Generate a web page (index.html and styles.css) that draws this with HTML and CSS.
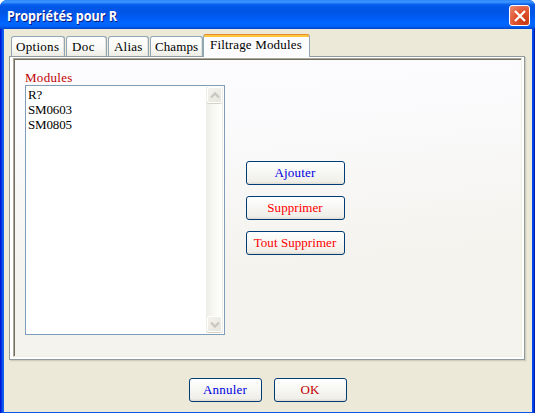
FILE: index.html
```html
<!DOCTYPE html>
<html lang="fr">
<head>
<meta charset="utf-8">
<title>Propriétés pour R</title>
<link rel="stylesheet" href="styles.css">
</head>
<body>
<div class="window">
  <header class="titlebar">
    <h1 class="title"><span class="t-text">Propriétés pour R</span></h1>
    <button class="close" aria-label="Fermer"><svg width="18" height="18" viewBox="0 0 18 18"><path d="M4 4L14 14M14 4L4 14" stroke="#fff" stroke-width="2.2" fill="none"/></svg></button>
  </header>
  <main class="client">
    <nav class="tabs">
      <div class="tab options"><span>Options</span></div>
      <div class="tab doc"><span>Doc</span></div>
      <div class="tab alias"><span>Alias</span></div>
      <div class="tab champs"><span>Champs</span></div>
      <div class="tab active"><span>Filtrage Modules</span></div>
    </nav>
    <section class="panel">
      <div class="page">
        <div class="modules">
          <div class="label"><span>Modules</span></div>
          <div class="list">
            <ul class="items"><li>R?</li><li>SM0603</li><li>SM0805</li></ul>
            <div class="scroll">
              <div class="arrow"><svg width="14" height="15" viewBox="0 0 14 15"><path d="M3 9.5L7 5.5L11 9.5" stroke="#c9c7bf" stroke-width="2.4" fill="none"/></svg></div>
              <div class="arrow"><svg width="14" height="15" viewBox="0 0 14 15"><path d="M3 5.5L7 9.5L11 5.5" stroke="#c9c7bf" stroke-width="2.4" fill="none"/></svg></div>
            </div>
          </div>
        </div>
        <div class="actions">
          <button class="btn blue"><span>Ajouter</span></button>
          <button class="btn red"><span class="tight">Supprimer</span></button>
          <button class="btn red"><span class="tight">Tout Supprimer</span></button>
        </div>
      </div>
    </section>
    <footer class="footer">
      <button class="btn blue"><span>Annuler</span></button>
      <button class="btn darkred"><span>OK</span></button>
    </footer>
  </main>
</div>
</body>
</html>
```

FILE: styles.css
```css
* { box-sizing: border-box; }
body {
  margin: 0;
  width: 535px;
  height: 413px;
  overflow: hidden;
  background: #fff;
  font: 13px/15px "Liberation Serif", serif;
  letter-spacing: 0.2px;
  color: #000;
}
button { font: inherit; letter-spacing: inherit; padding: 0; margin: 0; }
span { white-space: nowrap; }
.window {
  width: 535px;
  height: 413px;
  border-radius: 7px 6px 0 0;
  background: linear-gradient(90deg, #0017d6 0 1px, #0034e3 1px 2px, #0855ef 2px 3px, #1660e8 3px 4px, transparent 4px 532px, #0049f0 532px 533px, #0040e8 533px 534px, #001fa8 534px), #0855f0;
  padding: 0 3px 1px 4px;
  overflow: hidden;
}
.titlebar {
  height: 29px;
  margin: 0 -3px 0 -4px;
  padding: 0 5px 0 7px;
  display: flex;
  justify-content: space-between;
  background: linear-gradient(#2580f5 0, #3d95ff 1px, #318bff 3px, #0a63ee 4px, #0057e7 7px, #0055e5 12px, #005cf5 18px, #0066ff 23px, #0064fc 26px, #0050dc 28px, #0142c0 29px);
}
.title {
  margin: 8px 0 0;
  font: bold 13.5px/16px "Noto Sans", sans-serif;
  letter-spacing: 0;
  color: #fff;
  text-shadow: 1px 1px #0a1883;
}
.t-text { display: inline-block; transform: scaleX(.935); transform-origin: 0 0; }
.close {
  width: 21px;
  height: 21px;
  margin-top: 5px;
  border: 1px solid #fff;
  border-radius: 3px;
  background: radial-gradient(circle at 80% 85%, #c93a11 0, #e0532f 50%, #ec9580 105%);
  display: flex;
  align-items: center;
  justify-content: center;
}
.close svg { flex: none; }
.client { height: 383px; background: #ece9d8; padding: 5px 6px 0 5px; }
.tabs { display: flex; align-items: flex-end; height: 22px; margin-left: 2px; }
.tab {
  height: 20px;
  margin-right: 1px;
  border: 1px solid #91a7b4;
  border-bottom: 0;
  border-radius: 3px 3px 0 0;
  background: linear-gradient(#fff, #f9f9f6 60%, #edece4);
  padding: 2px 0 0 4px;
  box-shadow: inset -1px 0 #e3e2dc;
}
.options { width: 54px; letter-spacing: .3px; }
.doc { width: 41px; letter-spacing: .4px; padding-left: 5px; }
.alias { width: 41px; padding-left: 5px; }
.champs { width: 53px; margin-right: 0; letter-spacing: .1px; }
.active {
  width: 107px;
  height: 23px;
  margin: 0 0 -1px;
  border-top: 1px solid #e68b2c;
  background: linear-gradient(#ffc73c 0 2px, #fcfcfe 2px);
  padding: 2px 0 0 6px;
  letter-spacing: .17px;
  box-shadow: none;
  z-index: 1;
}
.panel {
  height: 304px;
  width: 516px;
  border: 1px solid #919b9c;
  background: #fff;
  padding: 1px 2px 2px 3px;
  box-shadow: 1px 1px #d0cebf, 2px 2px #e3e0d0;
}
.page {
  height: 299px;
  border: 1px solid #aca899;
  border-right-color: #f1efe2;
  border-bottom-color: #f1efe2;
  box-shadow: inset 1px 1px #716f64;
  background: linear-gradient(175deg, #fcfcfe 0, #fbfbfd 22%, #f4f3ee 66%, #f4f3ee 100%);
  display: flex;
  padding: 11px 0 0 11px;
}
.modules { width: 200px; }
.label { height: 15px; color: #c00000; letter-spacing: .3px; }
.list {
  height: 250px;
  border: 1px solid #7f9db9;
  background: #fff;
  display: flex;
  justify-content: space-between;
  padding: 1px;
}
.items { list-style: none; margin: 0 0 0 1px; padding: 0; letter-spacing: -.15px; }
.scroll {
  width: 17px;
  display: flex;
  flex-direction: column;
  justify-content: space-between;
  background: linear-gradient(90deg, #eeede5, #f7f7f2 40%, #fefefb);
  border-right: 1px solid #eeede5;
  padding: 0 0 1px 1px;
}
.arrow {
  width: 15px;
  height: 16px;
  border: 1px solid #fff;
  border-radius: 2px;
  background: linear-gradient(135deg, #f4f3ee, #e6e5dd);
  box-shadow: 0 1px #d5d3c2;
  display: flex;
  align-items: center;
  justify-content: center;
}
.arrow svg { flex: none; }
.actions { margin: 91px 0 0 21px; display: flex; flex-direction: column; gap: 11px; }
.btn {
  width: 99px;
  height: 24px;
  border: 1px solid #003c74;
  border-radius: 3px;
  background: linear-gradient(#fff, #f6f6f2 50%, #f0efe9 88%, #dedad0);
  display: flex;
  align-items: center;
  justify-content: center;
  padding: 0 1px 2px 0;
}
.tight { letter-spacing: .06px; }
.blue { color: #0000e0; }
.red { color: #f00; }
.darkred { color: #c00000; }
.footer { display: flex; gap: 12px; margin: 18px 0 0 180px; }
.footer .btn { width: 73px; }
```
